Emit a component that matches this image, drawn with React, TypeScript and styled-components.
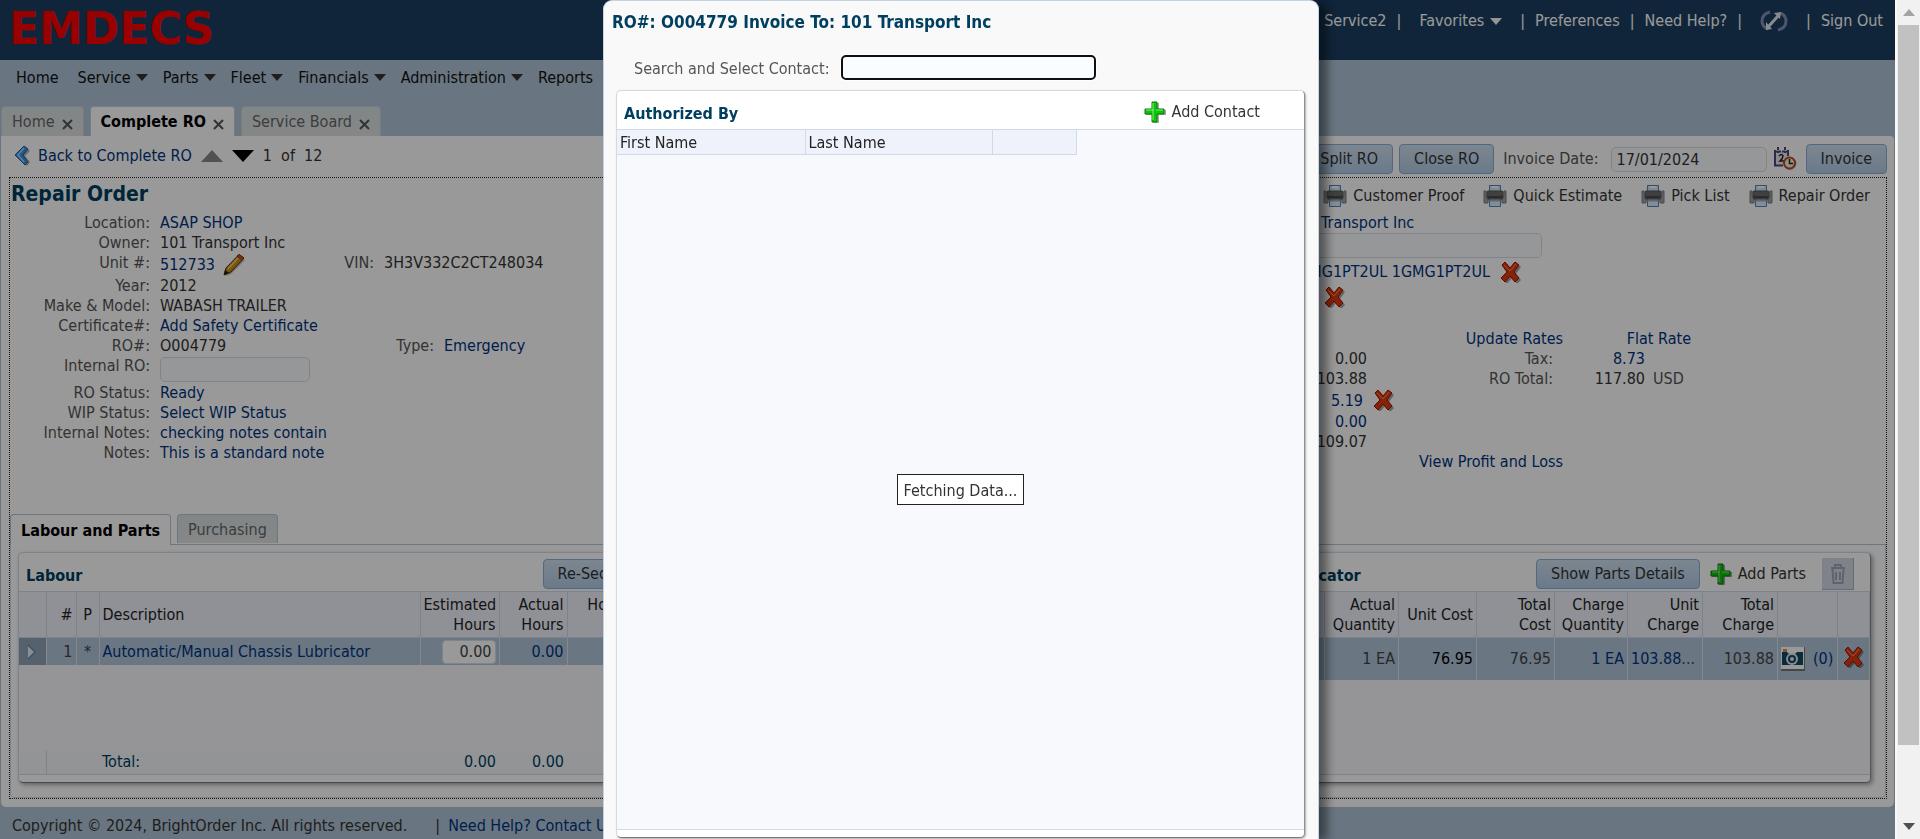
import React from 'react';
import styled, { createGlobalStyle, css } from 'styled-components';

const color = {
  header: '#1c3f61',
  band: '#afc3d5',
  heading: '#003f60',
  link: '#003380',
  label: '#555555',
  text: '#333333',
  line: '#cfdbe6',
  gridHead: '#eff2fa',
  gridBody: '#f8f9fd',
  rowSelected: '#b1c5d9',
};

const GlobalStyle = createGlobalStyle`
  *, *::before, *::after { box-sizing: border-box; }
  body {
    margin: 0;
    font-family: 'DejaVu Sans Condensed', 'DejaVu Sans', Tahoma, sans-serif;
    font-size: 16px;
    line-height: 20px;
    color: ${color.text};
  }
  button, input { font: inherit; color: inherit; }
  h1, h2, p, dl, dd, dt { margin: 0; }
`;

/* ---------- shared parts ---------- */

const TextLink = styled.a<{ $light?: boolean }>`
  color: ${({ $light }) => ($light ? '#ffffff' : color.link)};
  text-decoration: none;
  white-space: nowrap;
`;

const IconButton = styled.button`
  display: inline-flex;
  align-items: center;
  gap: 6px;
  padding: 0;
  border: 0;
  background: none;
  color: ${color.text};
  white-space: nowrap;
  cursor: pointer;
`;

const PushButton = styled.button`
  height: 30px;
  padding: 0 14px;
  border: 1px solid #86b0d8;
  border-radius: 4px;
  background: linear-gradient(#d0e0ef, #b2cbe6);
  color: ${color.text};
  white-space: nowrap;
  cursor: pointer;
`;

const TextBox = styled.input<{ $width: number }>`
  width: ${({ $width }) => $width}px;
  height: 25px;
  padding: 0 5px;
  border: 1px solid #d3dde4;
  border-radius: 5px;
  background: #fafcff;
`;

/* ---------- icons ---------- */

const Caret = styled.span<{ $light?: boolean }>`
  width: 0;
  height: 0;
  border: 6px solid transparent;
  border-top: 7px solid ${({ $light }) => ($light ? '#f5f5f5' : '#333333')};
  border-bottom: 0;
`;

const DeleteIcon = () => (
  <svg width="22" height="22" viewBox="0 0 22 22" aria-hidden="true">
    <path d="M3 5 6 2l5 6 5-6 4 3-5 7 5 6-4 4-5-6-5 6-4-4 6-6z" fill="#000" opacity=".35" transform="translate(1 1)" />
    <path d="M2 4 5 1l5 6 5-6 4 3-5 7 5 6-4 4-5-6-5 6-4-4 6-6z" fill="#e03a0c" stroke="#9c1200" strokeWidth="1" strokeLinejoin="round" />
    <path d="M4 4l6 6 6-7" fill="none" stroke="#ff8a55" strokeWidth="1" />
  </svg>
);

const PlusIcon = () => (
  <svg width="22" height="22" viewBox="0 0 22 22" aria-hidden="true">
    <path d="M9 2h6v7h7v5h-7v8H9v-8H2V9h7z" fill="#000" opacity=".35" />
    <path d="M8 1h5v7h7v5h-7v8H8v-8H1V8h7z" fill="#0fc40c" stroke="#087a08" strokeWidth="1" strokeLinejoin="round" />
    <path d="M9 19V2M2 9h8M12 9h7" fill="none" stroke="#7df06e" strokeWidth="1" />
  </svg>
);

const PrinterIcon = () => (
  <svg width="24" height="24" viewBox="0 0 24 24" aria-hidden="true">
    <path d="M1 7h2v5h18V7h2v12h-4v-3H5v3H1z" fill="#a4a4a4" stroke="#808080" strokeWidth="1" strokeLinejoin="round" />
    <path d="M6.500 1.500h11v7h-11z" fill="#cfe4f7" stroke="#4b86bd" />
    <path d="M9 3h6" stroke="#fff" strokeWidth="2" />
    <rect x="4" y="7" width="16" height="8" rx="1" fill="#6c6c6c" stroke="#555" />
    <path d="M5 13h14" stroke="#484848" strokeWidth="2" />
    <path d="M6.500 16.500h11v6h-11z" fill="#dcebf8" stroke="#4b86bd" />
    <path d="M7 16.500h10" stroke="#9ab" strokeWidth="2" />
  </svg>
);

const CalendarIcon = () => (
  <svg width="24" height="24" viewBox="0 0 24 24" aria-hidden="true">
    <path d="M1.500 4v14.500h14V4z" fill="#e6e6ee" />
    <path d="M2 3v15.500h8M15 3v6" fill="none" stroke="#4b4878" strokeWidth="2" />
    <path d="M1 4.500h15M5 0v6M12 0v6" stroke="#4b4878" strokeWidth="2" strokeDasharray="3 1" />
    <path d="M6 9q3-3 4 0q0 2-3 5h4" fill="none" stroke="#222" strokeWidth="1.500" />
    <circle cx="17" cy="16.500" r="6.500" fill="#000" opacity=".3" />
    <circle cx="16.500" cy="16" r="5.500" fill="#f8f0d0" stroke="#b8482c" strokeWidth="2" />
    <path d="M16.500 12v4.500h3.500" fill="none" stroke="#222" strokeWidth="1.500" />
  </svg>
);

const BackIcon = () => (
  <svg width="16" height="22" viewBox="0 0 16 22" aria-hidden="true">
    <path d="M13 3l3 3-5 5 5 6-3 4L3 11z" fill="#000" opacity=".3" />
    <path d="M10 1l4 3-5 6 5 7-3 3L1 10z" fill="#3f8fd8" stroke="#1f5ea4" strokeWidth="1" strokeLinejoin="round" />
    <path d="M10 3l-6 7 6 7" fill="none" stroke="#a8d4f8" strokeWidth="1.500" />
  </svg>
);

const PencilIcon = () => (
  <svg width="24" height="24" viewBox="0 0 24 24" aria-hidden="true">
    <path d="M3 23l1-5L17 4l5 3L8 21z" fill="#000" opacity=".25" />
    <path d="M1 22l2-7L16 1.500l5 3.500L8 19z" fill="#c98c18" stroke="#4c300a" strokeWidth="1" strokeLinejoin="round" />
    <path d="M16 1.500l5 3.500-2 2-5-4z" fill="#d0512e" stroke="#7a2410" strokeWidth=".8" />
    <path d="M5 16L15 5" stroke="#f6d276" strokeWidth="1.500" />
    <path d="M1 22l1-5 4 3z" fill="#2a1a08" />
  </svg>
);

const RefreshIcon = () => (
  <svg width="28" height="22" viewBox="0 0 28 22" aria-hidden="true">
    <g fill="none" stroke="#7f8fb4" strokeWidth="3">
      <path d="M10 2Q2 4 2 11q0 6 6 8" />
      <path d="M18 20q8-2 8-9 0-6-6-8" />
    </g>
    <path d="M9 16L18 6" stroke="#e4e8ee" strokeWidth="3" />
    <path d="M14 3l7-1-1 7zM6 12l6 7-6 1z" fill="#e4e8ee" />
  </svg>
);

const TrashIcon = () => (
  <svg width="16" height="20" viewBox="0 0 16 20" aria-hidden="true">
    <path d="M1 4h14M5 3V1h6v2M2.500 5l1 14h9l1-14M6 8v8M10 8v8" fill="none" stroke="#a0a6b6" strokeWidth="2" />
  </svg>
);

const CameraIcon = () => (
  <svg width="24" height="24" viewBox="0 0 24 24" aria-hidden="true">
    <path d="M0 0h24v24H0z" fill="#777" />
    <path d="M0 0h23v22H0z" fill="#fff" />
    <path d="M1 5h5l2 2h6l2-2h6v13H1z" fill="#0f4a66" />
    <path d="M2 2h4v3H2z" fill="#f08a2c" />
    <circle cx="11" cy="12" r="6" fill="#dfe9ee" />
    <circle cx="11" cy="12" r="4" fill="#0f4a66" />
    <circle cx="11" cy="12" r="2" fill="#dfe9ee" />
  </svg>
);

const RowMarker = () => (
  <svg width="10" height="16" viewBox="0 0 10 16" aria-hidden="true">
    <path d="M1 1v14l7-7z" fill="#e8eef4" />
    <path d="M1 1l7 7-7 7" fill="none" stroke="#5f88b4" strokeWidth="1.500" />
  </svg>
);

const CloseMark = () => (
  <svg width="11" height="11" viewBox="0 0 11 11" aria-hidden="true">
    <path d="M1 1l9 9M10 1L1 10" stroke="#555" strokeWidth="2" />
  </svg>
);

/* ---------- page frame ---------- */

const Window = styled.div`
  display: flex;
  min-height: 100vh;
  background: #ffffff;
`;

const Page = styled.div`
  flex: 1;
  min-width: 0;
  display: flex;
  flex-direction: column;
  background: ${color.band};
  overflow: hidden;
`;

const ScrollTrack = styled.div`
  position: relative;
  z-index: 3;
  display: flex;
  flex-direction: column;
  align-items: center;
  width: 25px;
  padding: 9px 2px;
  background: #f1f1f1;
  border-left: 2px solid #fafafa;
`;

const ScrollThumb = styled.div`
  flex: 1;
  width: 21px;
  margin: 9px 0 78px;
  background: #c1c1c1;
`;

const ScrollArrow = ({ down }: { down?: boolean }) => (
  <svg width="12" height="7" viewBox="0 0 12 7" aria-hidden="true">
    {down ? <path d="M0 0h12L6 7z" fill="#505050" /> : <path d="M0 7h12L6 0z" fill="#a3a3a3" />}
  </svg>
);

const Header = styled.header`
  display: flex;
  justify-content: space-between;
  height: 60px;
  background: ${color.header};
`;

const Logo = styled.div`
  padding: 2px 0 0 9px;
  font-family: 'DejaVu Sans', sans-serif;
  font-size: 44px;
  line-height: 54px;
  font-weight: 700;
  color: #ff0000;
`;

const UserLinks = styled.nav`
  display: flex;
  align-items: center;
  height: 42px;
  padding-right: 12px;
  gap: 10px;
  color: #ffffff;
`;

const Favorites = styled(IconButton)`
  color: #ffffff;
  padding: 0 8px;
`;

const LinkGap = styled.span`
  display: flex;
  width: 44px;
  justify-content: center;
`;

const MenuBar = styled.nav`
  display: flex;
  align-items: center;
  gap: 15px;
  height: 35px;
  padding: 0 16px;
`;

const MenuItem = styled(IconButton)<{ $plain: boolean }>`
  padding-right: ${({ $plain }) => ($plain ? 4 : 0)}px;
  gap: 5px;
  color: #111111;
`;

const TabStrip = styled.div<{ $inner?: boolean }>`
  display: flex;
  gap: 6px;
  align-items: flex-end;
  ${({ $inner }) =>
    $inner
      ? css`
          height: 31px;
          border-bottom: 1px solid #b6c6d4;
        `
      : css`
          height: 41px;
          padding-left: 1px;
        `}
`;

const PageTab = styled.button<{ $active?: boolean }>`
  display: flex;
  align-items: center;
  gap: 7px;
  height: 30px;
  padding: 1px 10px 0;
  border: 1px solid #c3d0da;
  border-bottom: 0;
  border-radius: 4px 4px 0 0;
  background: ${({ $active }) => ($active ? '#ffffff' : 'linear-gradient(#d7dfe3, #dfe2e0)')};
  color: ${({ $active }) => ($active ? '#000000' : '#666666')};
  font-weight: ${({ $active }) => ($active ? 700 : 400)};
  white-space: nowrap;
  svg { margin-top: 4px; }
`;

const InnerTab = styled(PageTab)<{ $active?: boolean }>`
  height: ${({ $active }) => ($active ? 31 : 29)}px;
  margin-bottom: ${({ $active }) => ($active ? -1 : 1)}px;
  border-color: #b6c6d4;
`;

const Sheet = styled.main`
  margin: 0 1px;
  padding: 0 7px 8px 8px;
  background: #ffffff;
  border-radius: 0 4px 5px 5px;
`;

const ActionBar = styled.div`
  display: flex;
  justify-content: space-between;
  height: 41px;
`;

const Pager = styled.div`
  display: flex;
  align-items: center;
  gap: 9px;
  padding: 0 0 1px 5px;
`;

const BackLink = styled(TextLink)`
  display: flex;
  align-items: center;
  gap: 8px;
`;

const Actions = styled.div`
  display: flex;
  align-items: center;
  gap: 6px;
  padding-top: 5px;
  label { margin: 0 6px 0 3px; color: ${color.label}; }
  ${IconButton} { margin-right: 3px; }
`;

const Order = styled.section`
  border: 1px dotted #222222;
`;

const OrderHead = styled.div`
  display: flex;
  justify-content: space-between;
  align-items: center;
  height: 35px;
  padding: 0 16px 0 1px;
`;

const OrderTitle = styled.h1`
  padding-bottom: 4px;
  font-size: 21px;
  line-height: 24px;
  color: ${color.heading};
`;

const PrintLinks = styled.div`
  display: flex;
  gap: 19px;
`;

const Columns = styled.div`
  display: grid;
  grid-template-columns: 1fr 1fr;
  min-height: 301px;
`;

const Fields = styled.dl``;

const Field = styled.div<{ $height?: number }>`
  display: flex;
  height: ${({ $height = 20 }) => $height}px;
  white-space: nowrap;
`;

const FieldLabel = styled.dt<{ $width: number }>`
  width: ${({ $width }) => $width}px;
  margin-right: 10px;
  text-align: right;
  color: ${color.label};
`;

const FieldValue = styled.dd`
  display: flex;
  align-items: center;
  gap: 8px;
  width: 170px;
`;

const Billing = styled.div`
  padding-left: 336px;
`;

const BillingLine = styled.div<{ $height: number; $indent?: boolean }>`
  display: flex;
  align-items: center;
  gap: 10px;
  height: ${({ $height }) => $height}px;
  padding-left: ${({ $indent }) => ($indent ? 5 : 0)}px;
  white-space: nowrap;
`;

const Totals = styled.div`
  display: grid;
  grid-template-columns: 83px 196px 82px 60px;
  align-items: center;
  margin-top: 22px;
`;

const Cell = styled.span<{ $kind?: 'label' | 'unit' | 'fee' | 'icon' | 'wide'; $tall?: boolean }>`
  height: ${({ $tall }) => ($tall ? 23 : 20)}px;
  text-align: right;
  white-space: nowrap;
  ${({ $kind }) => $kind === 'label' && css`padding-right: 10px; color: ${color.label};`}
  ${({ $kind }) => $kind === 'unit' && css`padding-left: 8px; text-align: left; color: ${color.label};`}
  ${({ $kind }) => $kind === 'fee' && css`padding: 2px 4px 0 0;`}
  ${({ $kind }) => $kind === 'icon' && css`padding-left: 6px; text-align: left;`}
  ${({ $kind }) => $kind === 'wide' && css`grid-column: 3 / 5; padding-right: 14px;`}
`;

/* ---------- grids ---------- */

const TabBody = styled.div`
  display: grid;
  grid-template-columns: 555fr 445fr;
  gap: 8px;
  padding: 7px 14px 14px 7px;
  border: 1px solid #cfdae4;
  border-top: 0;
  border-radius: 0 0 5px 5px;
`;

const Panel = styled.section`
  display: flex;
  flex-direction: column;
  min-width: 0;
  padding-bottom: 7px;
  background: #ffffff;
  border: 1px solid ${color.line};
  border-right-color: #8c9094;
  border-bottom-color: #777a7d;
  border-radius: 5px;
  box-shadow: 2px 2px 4px rgba(0, 0, 0, 0.35);
`;

const PanelHead = styled.div<{ $right?: number }>`
  display: flex;
  align-items: center;
  height: 39px;
  padding: 4px ${({ $right = 0 }) => $right}px 0 7px;
  border-bottom: 1px solid ${color.line};
`;

const PanelTitle = styled.h2`
  flex: 1;
  padding-top: 3px;
  font-size: 16px;
  line-height: 20px;
  color: ${color.heading};
  white-space: nowrap;
`;

const PanelTools = styled.div`
  display: flex;
  align-items: center;
  gap: 10px;
`;

const TrashButton = styled.button`
  display: flex;
  align-items: center;
  justify-content: center;
  width: 32px;
  height: 32px;
  margin-left: 6px;
  border: 0;
  border-right: 1px solid #aab4c2;
  border-bottom: 1px solid #aab4c2;
  background: #d3d9e4;
`;

const Grid = styled.table`
  width: 100%;
  height: 183px;
  table-layout: fixed;
  border-collapse: collapse;
  background: ${color.gridBody};
  border-bottom: 1px solid ${color.line};
`;

const HeadCell = styled.th<{ $align?: 'left' | 'center' | 'right' }>`
  height: 45px;
  padding: 2px 3px 0 ${({ $align }) => ($align ? 3 : 6)}px;
  border-right: 1px solid ${color.line};
  border-bottom: 1px solid ${color.line};
  background: ${color.gridHead};
  font-weight: 400;
  color: #222222;
  text-align: ${({ $align = 'right' }) => $align};
`;

const DataCell = styled.td<{ $align?: 'left' | 'center' | 'right'; $height?: number; $marker?: boolean; $strong?: boolean }>`
  height: ${({ $height = 28 }) => $height}px;
  padding: 1px 3px 0;
  border-right: 1px solid #dbe4ec;
  background: ${({ $marker }) => ($marker ? '#8fa2b8' : color.rowSelected)};
  color: ${({ $strong }) => ($strong ? '#000000' : '#444444')};
  text-align: ${({ $align = 'right' }) => $align};
  white-space: nowrap;
  svg { vertical-align: middle; }
`;

const EmptyCell = styled.td`
  padding: 0;
`;

const TotalCell = styled.td<{ $marker?: boolean; $align?: 'left' | 'right' }>`
  height: 25px;
  padding: 1px 3px 0;
  background: #f4f7fb;
  border-right: ${({ $marker }) => ($marker ? `1px solid ${color.line}` : '0')};
  color: ${color.heading};
  text-align: ${({ $align = 'right' }) => $align};
`;

const HoursInput = styled.input`
  width: 54px;
  height: 24px;
  padding: 0 3px;
  border: 1px solid #d3dde4;
  border-radius: 4px;
  background: #ffffff;
  text-align: right;
`;

const PhotoLinks = styled.span`
  display: flex;
  align-items: center;
  gap: 8px;
`;

const Footer = styled.footer`
  display: flex;
  flex: 1;
  gap: 8px;
  min-height: 32px;
  padding: 9px 12px 0;
  white-space: nowrap;
`;

const Copyright = styled.span`
  margin-right: 20px;
`;

/* ---------- contact dialog ---------- */

const Backdrop = styled.div`
  position: fixed;
  inset: 0;
  z-index: 1;
  background: rgba(0, 0, 0, 0.4);
`;

const DialogLayer = styled.div`
  position: fixed;
  inset: 0;
  z-index: 4;
  display: flex;
  justify-content: center;
  padding-left: 2px;
  pointer-events: none;
`;

const Dialog = styled.div`
  display: flex;
  flex-direction: column;
  width: 716px;
  padding: 9px 13px 1px 12px;
  background: #f9f9f9;
  border: 1px solid #c3d3e6;
  border-bottom: 0;
  border-radius: 9px 9px 0 0;
  box-shadow: 8px 2px 10px rgba(0, 0, 0, 0.45);
  pointer-events: auto;
`;

const DialogTitle = styled.h1`
  margin-left: -4px;
  font-size: 17px;
  line-height: 24px;
  color: ${color.heading};
`;

const SearchRow = styled.div`
  display: flex;
  align-items: center;
  gap: 14px;
  height: 27px;
  margin: 20px 0 9px;
  padding-left: 18px;
  label { padding-top: 2px; color: ${color.label}; }
`;

const SearchInput = styled.input`
  width: 251px;
  height: 21px;
  padding: 0 5px;
  border: 0;
  border-radius: 3px;
  background: #fafdff;
  outline: 2px solid #101010;
  box-shadow: 0 0 0 3px #ffffff;
`;

const ContactPanel = styled(Panel)`
  flex: 1;
  box-shadow: 1px 1px 2px rgba(0, 0, 0, 0.3);
`;

const ContactBody = styled.div`
  display: flex;
  flex: 1;
  flex-direction: column;
  background: ${color.gridBody};
  border-bottom: 1px solid ${color.line};
`;

const ContactGrid = styled.table`
  width: 459px;
  table-layout: fixed;
  border-collapse: collapse;
`;

const ContactHeadCell = styled(HeadCell)`
  height: 24px;
`;

const Loading = styled.div`
  display: flex;
  flex: 1;
  align-items: center;
  justify-content: center;
  padding-bottom: 4px;
`;

const LoadingBox = styled.p`
  padding: 6px 6px 3px;
  border: 1px solid #222222;
  background: #ffffff;
`;

/* ---------- data ---------- */

const menus: [string, boolean][] = [
  ['Home', false],
  ['Service', true],
  ['Parts', true],
  ['Fleet', true],
  ['Financials', true],
  ['Administration', true],
  ['Reports', false],
];

const partColumns: [string, number][] = [
  ['Actual Quantity', 74],
  ['Unit Cost', 78],
  ['Total Cost', 78],
  ['Charge Quantity', 73],
  ['Unit Charge', 75],
  ['Total Charge', 75],
];

const prints = ['Customer Proof', 'Quick Estimate', 'Pick List', 'Repair Order'];

const Remove = ({ label }: { label: string }) => (
  <IconButton aria-label={label}>
    <DeleteIcon />
  </IconButton>
);

const OrderFields = () => (
  <Fields>
    <Field>
      <FieldLabel $width={140}>Location:</FieldLabel>
      <FieldValue><TextLink href="#">ASAP SHOP</TextLink></FieldValue>
    </Field>
    <Field>
      <FieldLabel $width={140}>Owner:</FieldLabel>
      <FieldValue>101 Transport Inc</FieldValue>
    </Field>
    <Field $height={23}>
      <FieldLabel $width={140}>Unit #:</FieldLabel>
      <FieldValue>
        <TextLink href="#">512733</TextLink>
        <IconButton aria-label="Edit unit"><PencilIcon /></IconButton>
      </FieldValue>
      <FieldLabel $width={44}>VIN:</FieldLabel>
      <dd>3H3V332C2CT248034</dd>
    </Field>
    <Field>
      <FieldLabel $width={140}>Year:</FieldLabel>
      <FieldValue>2012</FieldValue>
    </Field>
    <Field>
      <FieldLabel $width={140}>Make &amp; Model:</FieldLabel>
      <FieldValue>WABASH TRAILER</FieldValue>
    </Field>
    <Field>
      <FieldLabel $width={140}>Certificate#:</FieldLabel>
      <FieldValue><TextLink href="#">Add Safety Certificate</TextLink></FieldValue>
    </Field>
    <Field>
      <FieldLabel $width={140}>RO#:</FieldLabel>
      <FieldValue>O004779</FieldValue>
      <FieldLabel $width={104}>Type:</FieldLabel>
      <dd><TextLink href="#">Emergency</TextLink></dd>
    </Field>
    <Field $height={27}>
      <FieldLabel $width={140}><label htmlFor="internal-ro">Internal RO:</label></FieldLabel>
      <FieldValue><TextBox id="internal-ro" $width={150} /></FieldValue>
    </Field>
    <Field>
      <FieldLabel $width={140}>RO Status:</FieldLabel>
      <FieldValue><TextLink href="#">Ready</TextLink></FieldValue>
    </Field>
    <Field>
      <FieldLabel $width={140}>WIP Status:</FieldLabel>
      <FieldValue><TextLink href="#">Select WIP Status</TextLink></FieldValue>
    </Field>
    <Field>
      <FieldLabel $width={140}>Internal Notes:</FieldLabel>
      <FieldValue><TextLink href="#">checking notes contain</TextLink></FieldValue>
    </Field>
    <Field>
      <FieldLabel $width={140}>Notes:</FieldLabel>
      <FieldValue><TextLink href="#">This is a standard note</TextLink></FieldValue>
    </Field>
  </Fields>
);

const BillingFields = () => (
  <Billing>
    <BillingLine $height={20} $indent><TextLink href="#">101 Transport Inc</TextLink></BillingLine>
    <BillingLine $height={25}><TextBox aria-label="Contact" $width={258} /></BillingLine>
    <BillingLine $height={28} $indent>
      <TextLink href="#">1GMG1PT2UL 1GMG1PT2UL</TextLink>
      <Remove label="Remove unit" />
    </BillingLine>
    <BillingLine $height={21} $indent>
      <TextLink href="#">N/A</TextLink>
      <Remove label="Remove reference" />
    </BillingLine>
    <Totals>
      <Cell />
      <Cell><TextLink href="#">Update Rates</TextLink></Cell>
      <Cell $kind="wide"><TextLink href="#">Flat Rate</TextLink></Cell>

      <Cell>0.00</Cell>
      <Cell $kind="label">Tax:</Cell>
      <Cell><TextLink href="#">8.73</TextLink></Cell>
      <Cell />

      <Cell>103.88</Cell>
      <Cell $kind="label">RO Total:</Cell>
      <Cell>117.80</Cell>
      <Cell $kind="unit">USD</Cell>

      <Cell $tall $kind="fee"><TextLink href="#">5.19</TextLink></Cell>
      <Cell $tall $kind="icon"><Remove label="Remove fee" /></Cell>
      <Cell />
      <Cell />

      <Cell><TextLink href="#">0.00</TextLink></Cell>
      <Cell />
      <Cell />
      <Cell />

      <Cell>109.07</Cell>
      <Cell />
      <Cell />
      <Cell />

      <Cell />
      <Cell><TextLink href="#">View Profit and Loss</TextLink></Cell>
    </Totals>
  </Billing>
);

const LabourPanel = () => (
  <Panel>
    <PanelHead $right={374}>
      <PanelTitle>Labour</PanelTitle>
      <PanelTools>
        <PushButton>Re-Sequence</PushButton>
      </PanelTools>
    </PanelHead>
    <Grid>
      <colgroup>
        {[27, 30, 23, 321, 79, 68, 71].map((w, i) => <col key={i} width={w} />)}
        <col />
      </colgroup>
      <thead>
        <tr>
          <HeadCell />
          <HeadCell>#</HeadCell>
          <HeadCell $align="center">P</HeadCell>
          <HeadCell $align="left">Description</HeadCell>
          <HeadCell $align="right">Estimated Hours</HeadCell>
          <HeadCell>Actual Hours</HeadCell>
          <HeadCell>Hourly Cost</HeadCell>
          <HeadCell />
        </tr>
      </thead>
      <tbody>
        <tr>
          <DataCell $marker $align="center"><RowMarker /></DataCell>
          <DataCell>1</DataCell>
          <DataCell $align="center">*</DataCell>
          <DataCell $align="left"><TextLink href="#">Automatic/Manual Chassis Lubricator</TextLink></DataCell>
          <DataCell><HoursInput aria-label="Estimated hours" defaultValue="0.00" /></DataCell>
          <DataCell><TextLink href="#">0.00</TextLink></DataCell>
          <DataCell>0.00</DataCell>
          <DataCell />
        </tr>
        <tr><EmptyCell colSpan={8} /></tr>
      </tbody>
      <tfoot>
        <tr>
          <TotalCell $marker />
          <TotalCell />
          <TotalCell />
          <TotalCell $align="left">Total:</TotalCell>
          <TotalCell>0.00</TotalCell>
          <TotalCell>0.00</TotalCell>
          <TotalCell colSpan={2} />
        </tr>
      </tfoot>
    </Grid>
  </Panel>
);

const PartsPanel = () => (
  <Panel>
    <PanelHead $right={16}>
      <PanelTitle>Automatic/Manual Chassis Lubricator</PanelTitle>
      <PanelTools>
        <PushButton>Show Parts Details</PushButton>
        <IconButton><PlusIcon />Add Parts</IconButton>
        <TrashButton aria-label="Delete part" disabled><TrashIcon /></TrashButton>
      </PanelTools>
    </PanelHead>
    <Grid>
      <colgroup>
        <col />
        {partColumns.map(([name, w]) => <col key={name} width={w} />)}
        <col width={60} />
        <col width={32} />
      </colgroup>
      <thead>
        <tr>
          <HeadCell />
          {partColumns.map(([name]) => <HeadCell key={name}>{name}</HeadCell>)}
          <HeadCell />
          <HeadCell />
        </tr>
      </thead>
      <tbody>
        <tr>
          <DataCell $height={43} />
          <DataCell $height={43}>1 EA</DataCell>
          <DataCell $height={43} $strong>76.95</DataCell>
          <DataCell $height={43}>76.95</DataCell>
          <DataCell $height={43}><TextLink href="#">1 EA</TextLink></DataCell>
          <DataCell $height={43} $align="left"><TextLink href="#">103.88</TextLink>...</DataCell>
          <DataCell $height={43}>103.88</DataCell>
          <DataCell $height={43}>
            <PhotoLinks><CameraIcon /><TextLink href="#">(0)</TextLink></PhotoLinks>
          </DataCell>
          <DataCell $height={43} $align="center"><Remove label="Remove part" /></DataCell>
        </tr>
        <tr><EmptyCell colSpan={9} /></tr>
      </tbody>
    </Grid>
  </Panel>
);

const ContactDialog = () => (
  <DialogLayer>
    <Dialog role="dialog" aria-labelledby="dialog-title">
      <DialogTitle id="dialog-title">RO#: O004779 Invoice To: 101 Transport Inc</DialogTitle>
      <SearchRow>
        <label htmlFor="contact-search">Search and Select Contact:</label>
        <SearchInput id="contact-search" />
      </SearchRow>
      <ContactPanel>
        <PanelHead $right={44}>
          <PanelTitle>Authorized By</PanelTitle>
          <IconButton><PlusIcon />Add Contact</IconButton>
        </PanelHead>
        <ContactBody>
          <ContactGrid>
            <colgroup>
              <col width={188} />
              <col width={187} />
              <col width={84} />
            </colgroup>
            <thead>
              <tr>
                <ContactHeadCell $align="left">First Name</ContactHeadCell>
                <ContactHeadCell $align="left">Last Name</ContactHeadCell>
                <ContactHeadCell />
              </tr>
            </thead>
          </ContactGrid>
          <Loading>
            <LoadingBox role="status">Fetching Data...</LoadingBox>
          </Loading>
        </ContactBody>
      </ContactPanel>
    </Dialog>
  </DialogLayer>
);

export default function App() {
  return (
    <>
      <GlobalStyle />
      <Window>
        <Page>
          <Header>
            <Logo>EMDECS</Logo>
            <UserLinks>
              <span>Manager, Service2</span>|
              <Favorites>Favorites <Caret $light /></Favorites>|
              <TextLink $light href="#">Preferences</TextLink>|
              <TextLink $light href="#">Need Help?</TextLink>|
              <LinkGap><RefreshIcon /></LinkGap>|
              <TextLink $light href="#">Sign Out</TextLink>
            </UserLinks>
          </Header>
          <MenuBar>
            {menus.map(([name, hasMenu]) => (
              <MenuItem key={name} $plain={!hasMenu}>{name}{hasMenu && <Caret />}</MenuItem>
            ))}
          </MenuBar>
          <TabStrip>
            <PageTab>Home <CloseMark /></PageTab>
            <PageTab $active>Complete RO <CloseMark /></PageTab>
            <PageTab>Service Board <CloseMark /></PageTab>
          </TabStrip>
          <Sheet>
            <ActionBar>
              <Pager>
                <BackLink href="#"><BackIcon />Back to Complete RO</BackLink>
                <svg width="22" height="12" viewBox="0 0 22 12" aria-hidden="true"><path d="M0 12h22L11 0z" fill="#888" /></svg>
                <svg width="22" height="12" viewBox="0 0 22 12" aria-hidden="true"><path d="M0 0h22L11 12z" fill="#000" /></svg>
                <span>1&nbsp; of&nbsp; 12</span>
              </Pager>
              <Actions>
                <PushButton>Split RO</PushButton>
                <PushButton>Close RO</PushButton>
                <label htmlFor="invoice-date">Invoice Date:</label>
                <TextBox id="invoice-date" $width={156} defaultValue="17/01/2024" />
                <IconButton aria-label="Pick date"><CalendarIcon /></IconButton>
                <PushButton>Invoice</PushButton>
              </Actions>
            </ActionBar>
            <Order>
              <OrderHead>
                <OrderTitle>Repair Order</OrderTitle>
                <PrintLinks>
                  {prints.map((name) => <IconButton key={name}><PrinterIcon />{name}</IconButton>)}
                </PrintLinks>
              </OrderHead>
              <Columns>
                <OrderFields />
                <BillingFields />
              </Columns>
              <TabStrip $inner>
                <InnerTab $active>Labour and Parts</InnerTab>
                <InnerTab>Purchasing</InnerTab>
              </TabStrip>
              <TabBody>
                <LabourPanel />
                <PartsPanel />
              </TabBody>
            </Order>
          </Sheet>
          <Footer>
            <Copyright>Copyright © 2024, BrightOrder Inc. All rights reserved.</Copyright>|
            <TextLink href="#">Need Help? Contact Us</TextLink>
          </Footer>
        </Page>
        <ScrollTrack>
          <ScrollArrow />
          <ScrollThumb />
          <ScrollArrow down />
        </ScrollTrack>
      </Window>
      <Backdrop />
      <ContactDialog />
    </>
  );
}
